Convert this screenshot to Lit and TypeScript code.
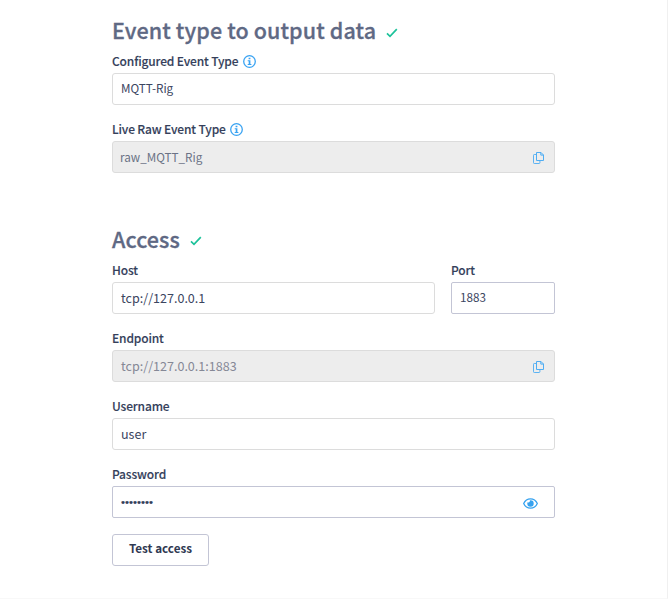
import { LitElement, html, css, nothing } from "lit";
import { customElement, property } from "lit/decorators.js";

const check = html`<svg class="check" width="12" height="10" viewBox="0 0 12 10">
  <path d="M1 5.4 L4 8.3 L10.8 1.2" fill="none" stroke="#1cc29a" stroke-width="1.7" />
</svg>`;

const info = html`<svg class="info" width="13" height="13" viewBox="0 0 13 13">
  <circle cx="6.5" cy="6.5" r="5.8" fill="none" stroke="#3aa3f2" stroke-width="1.3" />
  <path d="M5.6 2.7h1.8v1.6H5.6z M4.7 5.2h2.7v3.9h1v1H4.7v-1h1V6.2h-1z" fill="#3aa3f2" />
</svg>`;

const copy = html`<svg class="copy" width="11" height="12" viewBox="0 0 11 12">
  <path d="M3.5 2.5H1.2a.7.7 0 0 0-.7.7v7.6a.7.7 0 0 0 .7.7h5a.7.7 0 0 0 .7-.7V9" fill="none" stroke="#5cb3f3" />
  <path d="M3.5.5h4.5l2.5 2.5v5.5h-7z M7.8.5v2.6h2.7" fill="none" stroke="#4fadf3" />
</svg>`;

const eye = html`<svg class="eye" width="15" height="11" viewBox="0 0 15 11">
  <path d="M.7 5.5C2.2 2.2 4.6.8 7.5.8s5.3 1.4 6.8 4.7c-1.5 3.3-3.9 4.7-6.8 4.7S2.2 8.8.7 5.5z" fill="none" stroke="#36a2ef" stroke-width="1.3" />
  <path d="M7.5 2.3a3.2 3.2 0 1 1-3.2 3.2c0-.5.1-.9.3-1.3.9.7 2.5.1 2.3-1.7.2-.1.4-.2.6-.2z" fill="#36a2ef" />
</svg>`;

@customElement("form-field")
export class FormField extends LitElement {
  @property() label = "";
  @property() value = "";
  @property() kind = "";
  @property() icon = "";
  @property({ type: Boolean }) hint = false;

  static styles = css`
    :host { display: block; min-width: 0; }
    .label {
      display: flex; align-items: center; gap: 4.5px; height: 18px; margin-bottom: 3px;
      font-size: 12px; font-weight: 500; letter-spacing: -0.15px; color: #353f5b; white-space: nowrap;
      -webkit-text-stroke: 0.12px #353f5b;
    }
    .label span { padding-bottom: 2px; }
    svg { display: block; flex: none; }
    .box {
      display: flex; align-items: center; justify-content: space-between;
      box-sizing: border-box; height: 32px; padding: 0 10px 0 8px;
      border: 1px solid #dcdcdc; border-radius: 3px; background: #fff;
      font-size: 12.55px; color: #3b455f; white-space: nowrap;
    }
    .value { padding-bottom: 2px; }
    .small { font-size: 11.7px; }
    .small .value { padding-bottom: 4px; }
    .strong { border-color: #c3c5d5; border-radius: 2px; }
    .raw, .disabled { background: #ededed; }
    .raw { padding-left: 7px; font-size: 11.7px; color: #6b7285; }
    .disabled { color: #858896; }
    .password { padding-right: 16.5px; }
    .password .value {
      padding-bottom: 1px; font: 11.4px "Liberation Sans", sans-serif; color: #353f5b;
      -webkit-text-stroke: 0.15px #353f5b;
    }
    .eye { margin-top: 2px; }
    .copy { margin-top: 2px; }
  `;

  render() {
    return html`
      <div class="label"><span>${this.label}</span>${this.hint ? info : nothing}</div>
      <div class="box ${this.kind}">
        <span class="value">${this.value}</span>
        ${this.icon === "copy" ? copy : this.icon === "eye" ? eye : nothing}
      </div>
    `;
  }
}

@customElement("app-root")
export class AppRoot extends LitElement {
  static styles = css`
    :host {
      display: block; box-sizing: border-box; width: 668px; height: 599px; overflow: hidden;
      border-right: 1px solid #f0f0f0; border-bottom: 1px solid #f8f8f8;
      background: #fff; font-family: "Noto Sans CJK SC", "Noto Sans", sans-serif;
    }
    .form { width: 443px; padding: 16px 0 0 112px; }
    h2 {
      display: flex; align-items: center; gap: 10px; height: 30px; margin: 0 0 6px;
      font-size: 21.5px; font-weight: 500; letter-spacing: 0.11px; color: #5f6984; white-space: nowrap;
      -webkit-text-stroke: 0.3px #5f6984;
    }
    h2 span { padding-bottom: 4px; }
    .check { display: block; margin-top: 3px; }
    .access .check { margin-top: 2px; }
    .fields { display: grid; gap: 15px; }
    .row { display: grid; grid-template-columns: 323px 104px; gap: 16px; }
    .access { margin-top: 52px; }
    button {
      display: block; width: 97px; height: 32px; margin-top: 16px; padding: 0 0 5px;
      border: 1px solid #c3c5d5; border-radius: 3px; background: #fff;
      font: 600 11.7px "Noto Sans CJK SC", "Noto Sans", sans-serif; color: #303952;
    }
  `;

  render() {
    return html`
      <div class="form">
        <section>
          <h2><span>Event type to output data</span>${check}</h2>
          <div class="fields">
            <form-field label="Configured Event Type" value="MQTT-Rig" kind="small" hint></form-field>
            <form-field label="Live Raw Event Type" value="raw_MQTT_Rig" kind="raw" icon="copy" hint></form-field>
          </div>
        </section>
        <section class="access">
          <h2><span>Access</span>${check}</h2>
          <div class="fields">
            <div class="row">
              <form-field label="Host" value="tcp://127.0.0.1"></form-field>
              <form-field label="Port" value="1883" kind="small strong"></form-field>
            </div>
            <form-field label="Endpoint" value="tcp://127.0.0.1:1883" kind="disabled" icon="copy"></form-field>
            <form-field label="Username" value="user"></form-field>
            <form-field label="Password" value="••••••••" kind="small strong password" icon="eye"></form-field>
          </div>
          <button>Test access</button>
        </section>
      </div>
    `;
  }
}
